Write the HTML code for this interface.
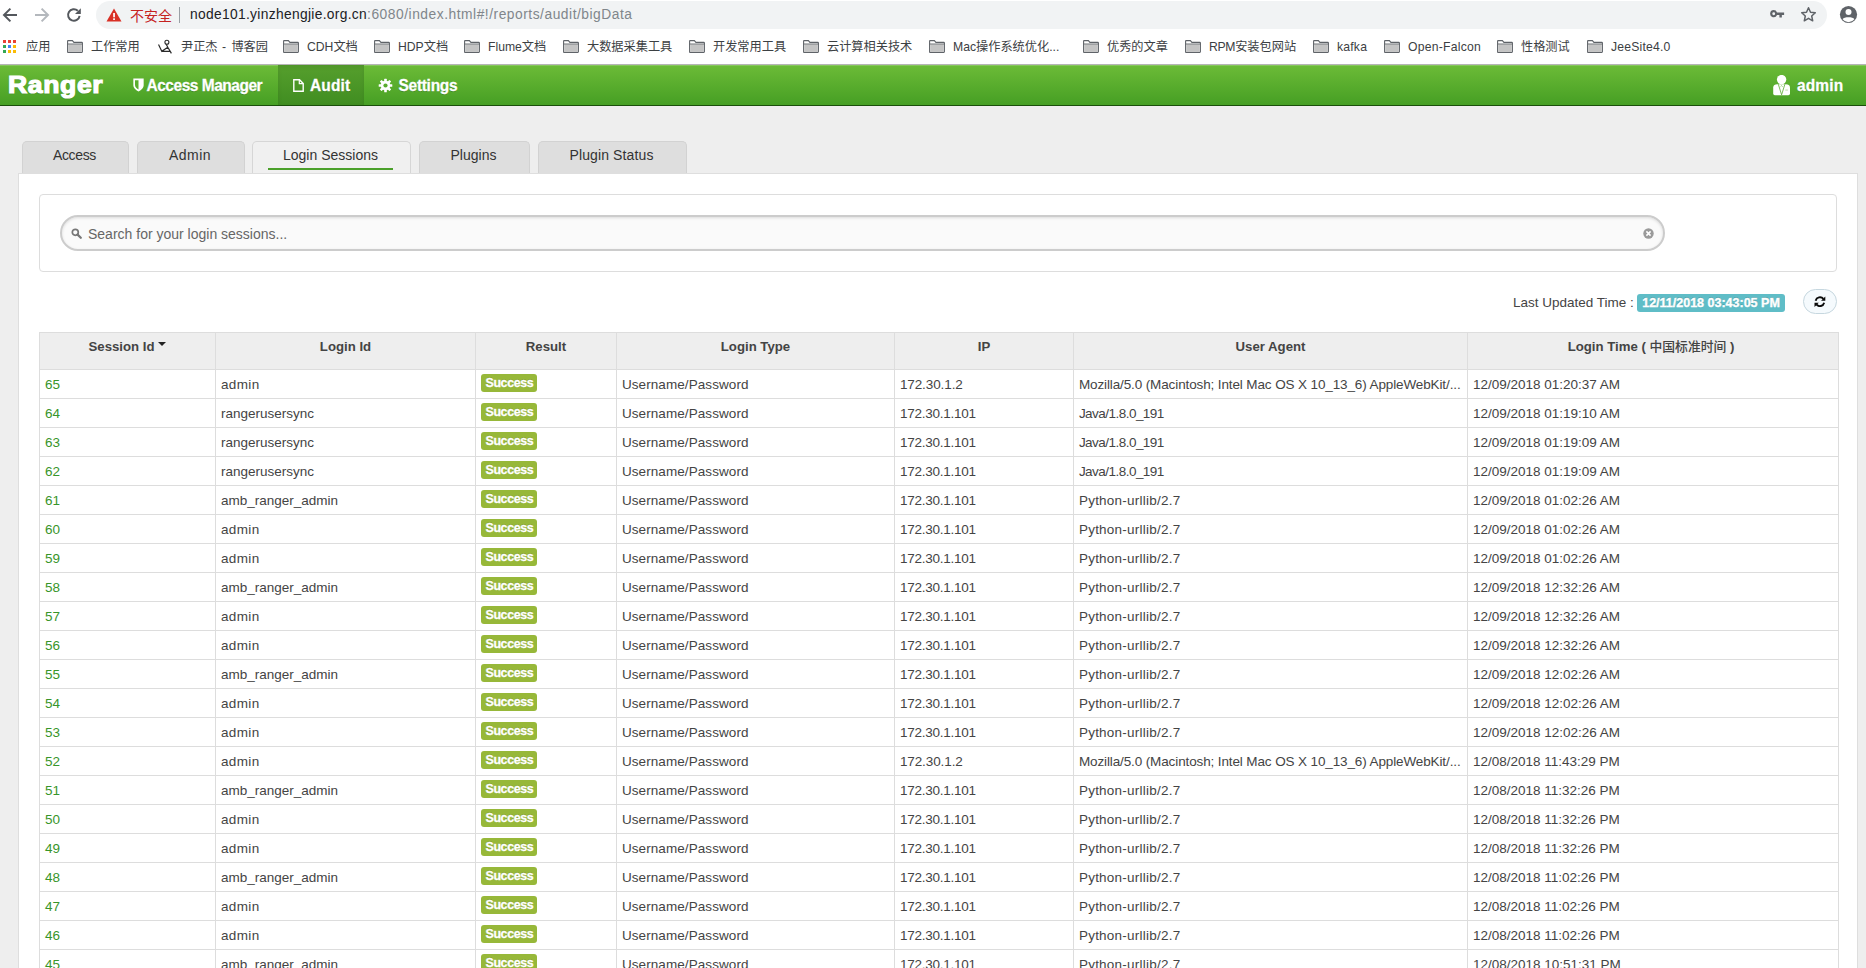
<!DOCTYPE html>
<html lang="zh">
<head>
<meta charset="utf-8">
<title>Ranger - Audit - Login Sessions</title>
<style>
*{box-sizing:border-box;margin:0;padding:0}
html,body{width:1866px;height:968px;overflow:hidden;background:#eeeeee;font-family:"Liberation Sans","Noto Sans CJK SC",sans-serif;font-size:13.5px;color:#444}
.abs{position:absolute}
/* ---------- browser chrome ---------- */
#chrome{position:absolute;left:0;top:0;width:1866px;height:64px;background:#fff}
#omni{position:absolute;left:96px;top:1px;width:1731px;height:28px;border-radius:14px;background:#f1f3f4}
#url{position:absolute;left:190px;top:6px;font-size:13.8px;line-height:18px;color:#202124;white-space:nowrap;letter-spacing:0.32px}
#url span{color:#80868b;letter-spacing:0.52px}
#unsafe{position:absolute;left:130px;top:5.6px;font-size:14px;line-height:20px;color:#c5221f;white-space:nowrap;font-family:"Liberation Sans","Noto Sans CJK SC",sans-serif}
#sep{position:absolute;left:179px;top:7px;width:1px;height:16px;background:#9aa0a6}
#bm{position:absolute;left:0;top:31px;width:1866px;height:33px;white-space:nowrap}
.bk{position:absolute;top:7.2px;font-size:12.2px;line-height:18px;color:#3c4043;white-space:nowrap;font-family:"Liberation Sans","Noto Sans CJK SC",sans-serif}
.fo{position:absolute;top:9.2px;width:16px;height:13px}
#chromeline{position:absolute;left:0;top:64px;width:1866px;height:1px;background:#b6b4b6}
/* ---------- navbar ---------- */
#nav{position:absolute;left:0;top:65px;width:1866px;height:41px;background:linear-gradient(#6cbb37,#469f24);border-bottom:1px solid #1a4f0a;box-shadow:inset 0 1px 0 rgba(255,255,255,.18)}
#logo{position:absolute;left:8.1px;top:2.3px;font-size:24px;line-height:35px;font-weight:bold;color:#fff;letter-spacing:0.6px;transform:scaleX(1.105);transform-origin:0 0;-webkit-text-stroke:1.2px #fff;text-shadow:0 1px 1px rgba(0,0,0,.25)}
.ni{position:absolute;top:0;height:40px;color:#fff;font-weight:bold;font-size:15.5px;line-height:41px;white-space:nowrap;text-shadow:0 1px 0 rgba(0,0,0,.2)}
#audit{left:278px;width:86px;background:linear-gradient(#569f2d,#408d21);box-shadow:inset 0 2px 4px rgba(0,0,0,.08)}
/* ---------- tabs ---------- */
.tab{position:absolute;top:141px;height:32px;background:#dedede;border:1px solid #d2d2d2;border-bottom:none;border-radius:5px 5px 0 0;text-align:center;padding-right:2px;font-size:14px;line-height:27px;color:#333}
.tab.act{background:#f0f0f0;border-color:#d6d6d6}
.tab.act i{position:absolute;left:15px;right:17px;bottom:3px;height:2px;background:#4aa02a}
#panel{position:absolute;left:18px;top:173px;width:1840px;height:820px;background:#fff;border:1px solid #dedede;z-index:2}
#sbox{z-index:3;position:absolute;left:39px;top:194px;width:1798px;height:78px;border:1px solid #ddd;border-radius:4px;background:#fff}
#sinp{z-index:3;position:absolute;left:60px;top:215px;width:1605px;height:36px;border:2px solid #ccc;border-radius:18px;background:#fafafa;box-shadow:inset 0 1px 3px rgba(0,0,0,.12)}
#sinp span{position:absolute;left:26px;top:7px;font-size:14px;line-height:20px;color:#666;white-space:nowrap}
#lut{z-index:3;position:absolute;left:1513px;top:293.8px;font-size:13.5px;line-height:18px;color:#444;white-space:nowrap}
#badge{z-index:3;position:absolute;left:1637px;top:294px;width:148px;height:18px;border-radius:3px;background:#5fbdc7;color:#fff;font-weight:bold;font-size:12.5px;line-height:18.4px;text-align:center;white-space:nowrap;letter-spacing:0px;-webkit-text-stroke:0.35px #fff;text-shadow:0 -1px 0 rgba(0,0,0,.2)}
#rbtn{z-index:3;position:absolute;left:1803px;top:289px;width:34px;height:25px;border:1px solid #c6d7df;border-radius:13px;background:#f5fafd}
/* ---------- table ---------- */
table{z-index:3;position:absolute;left:39px;top:332px;width:1799px;border-collapse:collapse;table-layout:fixed}
th,td{border:1px solid #ddd;white-space:nowrap;overflow:hidden}
th{height:37px;background:#eeeeee;font-weight:bold;font-size:13.2px;line-height:16px;color:#444;text-align:center;padding:0 0 8px 0}
th b{font-weight:500;font-size:12.8px;line-height:16px}
td{height:29px;padding:1.6px 0 0 4.9px;font-size:13.5px;line-height:26.4px;color:#444;background:#fff}
td a{color:#38952a}
.lbl{display:inline-block;vertical-align:top;margin-top:2.4px;margin-left:0.5px;height:18px;width:56px;border-radius:3px;background:#97b839;color:#fff;font-weight:bold;font-size:12.4px;line-height:18.6px;text-align:center;letter-spacing:-0.35px;-webkit-text-stroke:0.3px #fff;text-shadow:0 -1px 0 rgba(0,0,0,.15)}
.car{display:inline-block;width:0;height:0;border-left:4px solid transparent;border-right:4px solid transparent;border-top:4px solid #222;vertical-align:top;margin:3px 0 0 4px}
</style>
</head>
<body>
<div id="chrome">
  <div id="omni"></div>
  <svg class="abs" style="left:2px;top:7px" width="16" height="16" viewBox="0 0 16 16"><path d="M15 8H2.6M8.4 1.6L2 8L8.4 14.4" fill="none" stroke="#54585d" stroke-width="2"/></svg>
  <svg class="abs" style="left:34px;top:7px" width="16" height="16" viewBox="0 0 16 16"><path d="M1 8H13.4M7.6 1.6L14 8L7.6 14.4" fill="none" stroke="#b4b8bd" stroke-width="2"/></svg>
  <svg class="abs" style="left:66px;top:7px" width="16" height="16" viewBox="0 0 16 16"><path d="M13.6 8.8A5.8 5.8 0 1 1 11.8 3.7" fill="none" stroke="#54585d" stroke-width="2"/><path d="M14.8 1.2V7H9Z" fill="#54585d"/></svg>
  <svg class="abs" style="left:106px;top:8px" width="16" height="14" viewBox="0 0 16 14"><path d="M8 0.5L15.5 13.5H0.5Z" fill="#d93025"/><rect x="7.2" y="5" width="1.7" height="4.3" fill="#fff"/><rect x="7.2" y="10.3" width="1.7" height="1.7" fill="#fff"/></svg>
  <div id="unsafe">不安全</div>
  <div id="sep"></div>
  <div id="url">node101.yinzhengjie.org.cn<span>:6080/index.html#!/reports/audit/bigData</span></div>
  <svg class="abs" style="left:1768.5px;top:7.2px" width="17" height="13.4" viewBox="0 0 18 14"><path d="M5 3.2a3.8 3.8 0 1 0 3.5 5.3H11V11h2.6V8.5H16V5.7H8.5A3.8 3.8 0 0 0 5 3.2zM5 5.6a1.5 1.5 0 1 1 0 3a1.5 1.5 0 0 1 0-3z" fill="#5f6368" fill-rule="evenodd"/></svg>
  <svg class="abs" style="left:1800px;top:6px" width="17" height="17" viewBox="0 0 17 17"><path d="M8.5 1.8L10.5 6.3L15.3 6.8L11.7 10L12.7 14.8L8.5 12.3L4.3 14.8L5.3 10L1.7 6.8L6.5 6.3Z" fill="none" stroke="#5f6368" stroke-width="1.5" stroke-linejoin="round"/></svg>
  <svg class="abs" style="left:1839px;top:5px" width="19" height="19" viewBox="0 0 19 19"><circle cx="9.5" cy="9.5" r="8.6" fill="#5f6368"/><circle cx="9.5" cy="7" r="3" fill="#fff"/><path d="M3.6 14.2C5 11.6 14 11.6 15.4 14.2A7.4 7.4 0 0 1 3.6 14.2Z" fill="#fff"/></svg>
  <div id="bm">
<svg class="abs" style="left:3px;top:9px" width="13" height="13" viewBox="0 0 13 13"><rect x="0" y="0" width="3" height="3" fill="#ea4335"/><rect x="5" y="0" width="3" height="3" fill="#ea4335"/><rect x="10" y="0" width="3" height="3" fill="#ea4335"/><rect x="0" y="5" width="3" height="3" fill="#34a853"/><rect x="5" y="5" width="3" height="3" fill="#4285f4"/><rect x="10" y="5" width="3" height="3" fill="#fbbc05"/><rect x="0" y="10" width="3" height="3" fill="#34a853"/><rect x="5" y="10" width="3" height="3" fill="#fbbc05"/><rect x="10" y="10" width="3" height="3" fill="#fbbc05"/></svg>
<div class="bk" style="left:26px">应用</div>
<svg class="fo" style="left:67px" viewBox="0 0 16 13"><path d="M0.6 1.2Q0.6 0.6 1.2 0.6H5.4L6.9 2.4H14.8Q15.4 2.4 15.4 3V11.8Q15.4 12.4 14.8 12.4H1.2Q0.6 12.4 0.6 11.8Z" fill="#fff" stroke="#5f6368" stroke-width="1.1"/><path d="M1.2 4.3H14.8V11.9H1.2Z" fill="#c4c4c4"/><path d="M0.6 4H15.4" stroke="#5f6368" stroke-width="0.9"/></svg>
<div class="bk" style="left:91px">工作常用</div>
<svg class="abs" style="left:158px;top:8px" width="16" height="16" viewBox="0 0 16 16"><path d="M0.5 5.5L3.8 12.3L9.8 8.2M3.8 12.3H12.6M8.2 5.2L9.8 8.2L13.4 14.4" fill="none" stroke="#2a2a2a" stroke-width="1.2"/><circle cx="8.9" cy="3.3" r="2" fill="none" stroke="#2a2a2a" stroke-width="1.1"/></svg>
<div class="bk" style="left:181px">尹正杰<span style="letter-spacing:1px"> - </span>博客园</div>
<svg class="fo" style="left:283px" viewBox="0 0 16 13"><path d="M0.6 1.2Q0.6 0.6 1.2 0.6H5.4L6.9 2.4H14.8Q15.4 2.4 15.4 3V11.8Q15.4 12.4 14.8 12.4H1.2Q0.6 12.4 0.6 11.8Z" fill="#fff" stroke="#5f6368" stroke-width="1.1"/><path d="M1.2 4.3H14.8V11.9H1.2Z" fill="#c4c4c4"/><path d="M0.6 4H15.4" stroke="#5f6368" stroke-width="0.9"/></svg>
<div class="bk" style="left:307px">CDH文档</div>
<svg class="fo" style="left:374px" viewBox="0 0 16 13"><path d="M0.6 1.2Q0.6 0.6 1.2 0.6H5.4L6.9 2.4H14.8Q15.4 2.4 15.4 3V11.8Q15.4 12.4 14.8 12.4H1.2Q0.6 12.4 0.6 11.8Z" fill="#fff" stroke="#5f6368" stroke-width="1.1"/><path d="M1.2 4.3H14.8V11.9H1.2Z" fill="#c4c4c4"/><path d="M0.6 4H15.4" stroke="#5f6368" stroke-width="0.9"/></svg>
<div class="bk" style="left:398px">HDP文档</div>
<svg class="fo" style="left:464px" viewBox="0 0 16 13"><path d="M0.6 1.2Q0.6 0.6 1.2 0.6H5.4L6.9 2.4H14.8Q15.4 2.4 15.4 3V11.8Q15.4 12.4 14.8 12.4H1.2Q0.6 12.4 0.6 11.8Z" fill="#fff" stroke="#5f6368" stroke-width="1.1"/><path d="M1.2 4.3H14.8V11.9H1.2Z" fill="#c4c4c4"/><path d="M0.6 4H15.4" stroke="#5f6368" stroke-width="0.9"/></svg>
<div class="bk" style="left:488px">Flume文档</div>
<svg class="fo" style="left:563px" viewBox="0 0 16 13"><path d="M0.6 1.2Q0.6 0.6 1.2 0.6H5.4L6.9 2.4H14.8Q15.4 2.4 15.4 3V11.8Q15.4 12.4 14.8 12.4H1.2Q0.6 12.4 0.6 11.8Z" fill="#fff" stroke="#5f6368" stroke-width="1.1"/><path d="M1.2 4.3H14.8V11.9H1.2Z" fill="#c4c4c4"/><path d="M0.6 4H15.4" stroke="#5f6368" stroke-width="0.9"/></svg>
<div class="bk" style="left:587px">大数据采集工具</div>
<svg class="fo" style="left:689px" viewBox="0 0 16 13"><path d="M0.6 1.2Q0.6 0.6 1.2 0.6H5.4L6.9 2.4H14.8Q15.4 2.4 15.4 3V11.8Q15.4 12.4 14.8 12.4H1.2Q0.6 12.4 0.6 11.8Z" fill="#fff" stroke="#5f6368" stroke-width="1.1"/><path d="M1.2 4.3H14.8V11.9H1.2Z" fill="#c4c4c4"/><path d="M0.6 4H15.4" stroke="#5f6368" stroke-width="0.9"/></svg>
<div class="bk" style="left:713px">开发常用工具</div>
<svg class="fo" style="left:803px" viewBox="0 0 16 13"><path d="M0.6 1.2Q0.6 0.6 1.2 0.6H5.4L6.9 2.4H14.8Q15.4 2.4 15.4 3V11.8Q15.4 12.4 14.8 12.4H1.2Q0.6 12.4 0.6 11.8Z" fill="#fff" stroke="#5f6368" stroke-width="1.1"/><path d="M1.2 4.3H14.8V11.9H1.2Z" fill="#c4c4c4"/><path d="M0.6 4H15.4" stroke="#5f6368" stroke-width="0.9"/></svg>
<div class="bk" style="left:827px">云计算相关技术</div>
<svg class="fo" style="left:929px" viewBox="0 0 16 13"><path d="M0.6 1.2Q0.6 0.6 1.2 0.6H5.4L6.9 2.4H14.8Q15.4 2.4 15.4 3V11.8Q15.4 12.4 14.8 12.4H1.2Q0.6 12.4 0.6 11.8Z" fill="#fff" stroke="#5f6368" stroke-width="1.1"/><path d="M1.2 4.3H14.8V11.9H1.2Z" fill="#c4c4c4"/><path d="M0.6 4H15.4" stroke="#5f6368" stroke-width="0.9"/></svg>
<div class="bk" style="left:953px">Mac操作系统优化...</div>
<svg class="fo" style="left:1083px" viewBox="0 0 16 13"><path d="M0.6 1.2Q0.6 0.6 1.2 0.6H5.4L6.9 2.4H14.8Q15.4 2.4 15.4 3V11.8Q15.4 12.4 14.8 12.4H1.2Q0.6 12.4 0.6 11.8Z" fill="#fff" stroke="#5f6368" stroke-width="1.1"/><path d="M1.2 4.3H14.8V11.9H1.2Z" fill="#c4c4c4"/><path d="M0.6 4H15.4" stroke="#5f6368" stroke-width="0.9"/></svg>
<div class="bk" style="left:1107px">优秀的文章</div>
<svg class="fo" style="left:1185px" viewBox="0 0 16 13"><path d="M0.6 1.2Q0.6 0.6 1.2 0.6H5.4L6.9 2.4H14.8Q15.4 2.4 15.4 3V11.8Q15.4 12.4 14.8 12.4H1.2Q0.6 12.4 0.6 11.8Z" fill="#fff" stroke="#5f6368" stroke-width="1.1"/><path d="M1.2 4.3H14.8V11.9H1.2Z" fill="#c4c4c4"/><path d="M0.6 4H15.4" stroke="#5f6368" stroke-width="0.9"/></svg>
<div class="bk" style="left:1209px"><span style="letter-spacing:-0.3px">RPM</span>安装包网站</div>
<svg class="fo" style="left:1313px" viewBox="0 0 16 13"><path d="M0.6 1.2Q0.6 0.6 1.2 0.6H5.4L6.9 2.4H14.8Q15.4 2.4 15.4 3V11.8Q15.4 12.4 14.8 12.4H1.2Q0.6 12.4 0.6 11.8Z" fill="#fff" stroke="#5f6368" stroke-width="1.1"/><path d="M1.2 4.3H14.8V11.9H1.2Z" fill="#c4c4c4"/><path d="M0.6 4H15.4" stroke="#5f6368" stroke-width="0.9"/></svg>
<div class="bk" style="left:1337px"><span style="letter-spacing:0.2px">kafka</span></div>
<svg class="fo" style="left:1384px" viewBox="0 0 16 13"><path d="M0.6 1.2Q0.6 0.6 1.2 0.6H5.4L6.9 2.4H14.8Q15.4 2.4 15.4 3V11.8Q15.4 12.4 14.8 12.4H1.2Q0.6 12.4 0.6 11.8Z" fill="#fff" stroke="#5f6368" stroke-width="1.1"/><path d="M1.2 4.3H14.8V11.9H1.2Z" fill="#c4c4c4"/><path d="M0.6 4H15.4" stroke="#5f6368" stroke-width="0.9"/></svg>
<div class="bk" style="left:1408px"><span style="letter-spacing:0.24px">Open-Falcon</span></div>
<svg class="fo" style="left:1497px" viewBox="0 0 16 13"><path d="M0.6 1.2Q0.6 0.6 1.2 0.6H5.4L6.9 2.4H14.8Q15.4 2.4 15.4 3V11.8Q15.4 12.4 14.8 12.4H1.2Q0.6 12.4 0.6 11.8Z" fill="#fff" stroke="#5f6368" stroke-width="1.1"/><path d="M1.2 4.3H14.8V11.9H1.2Z" fill="#c4c4c4"/><path d="M0.6 4H15.4" stroke="#5f6368" stroke-width="0.9"/></svg>
<div class="bk" style="left:1521px">性格测试</div>
<svg class="fo" style="left:1587px" viewBox="0 0 16 13"><path d="M0.6 1.2Q0.6 0.6 1.2 0.6H5.4L6.9 2.4H14.8Q15.4 2.4 15.4 3V11.8Q15.4 12.4 14.8 12.4H1.2Q0.6 12.4 0.6 11.8Z" fill="#fff" stroke="#5f6368" stroke-width="1.1"/><path d="M1.2 4.3H14.8V11.9H1.2Z" fill="#c4c4c4"/><path d="M0.6 4H15.4" stroke="#5f6368" stroke-width="0.9"/></svg>
<div class="bk" style="left:1611px"><span style="letter-spacing:0.2px">JeeSite4.0</span></div>
  </div>
</div>
<div id="chromeline"></div>
<div id="nav">
  <div id="logo">Ranger</div>
  <div class="ni" style="left:131px"><svg style="position:absolute;left:2px;top:13px" width="11" height="14" viewBox="0 0 10 13" preserveAspectRatio="none"><path d="M0.3 0.5H9.7V6.5C9.7 9.5 7 11.6 5 12.6C3 11.6 0.3 9.5 0.3 6.5Z" fill="#fff"/><path d="M5 2V10.7C3.6 9.8 1.8 8.4 1.8 6.4V2Z" fill="#5aae2f"/></svg><span style="display:inline-block;transform:scaleY(1.1);transform-origin:0 68%;-webkit-text-stroke:0.25px #fff;margin-left:15.5px;letter-spacing:-0.48px">Access Manager</span></div>
  <div class="ni" id="audit"><svg style="position:absolute;left:15px;top:14px" width="11" height="13" viewBox="0 0 11 13"><path d="M0.8 0.8H6.5L10.2 4.5V12.2H0.8Z" fill="none" stroke="#fff" stroke-width="1.4"/><path d="M6.3 0.8V4.7H10.2" fill="none" stroke="#fff" stroke-width="1.2"/></svg><span style="display:inline-block;transform:scaleY(1.1);transform-origin:0 68%;-webkit-text-stroke:0.25px #fff;margin-left:32px;letter-spacing:0.14px">Audit</span></div>
  <div class="ni" style="left:378px"><svg style="position:absolute;left:0px;top:13px" width="15" height="15" viewBox="0 0 15 15"><g fill="#fff"><circle cx="7.5" cy="7.5" r="4.8"/><g id="t"><rect x="6.2" y="0.7" width="2.6" height="13.6" rx="0.5"/></g><rect x="6.2" y="0.7" width="2.6" height="13.6" rx="0.5" transform="rotate(45 7.5 7.5)"/><rect x="6.2" y="0.7" width="2.6" height="13.6" rx="0.5" transform="rotate(90 7.5 7.5)"/><rect x="6.2" y="0.7" width="2.6" height="13.6" rx="0.5" transform="rotate(135 7.5 7.5)"/></g><circle cx="7.5" cy="7.5" r="2.1" fill="#58ac2d"/></svg><span style="display:inline-block;transform:scaleY(1.1);transform-origin:0 68%;-webkit-text-stroke:0.25px #fff;margin-left:20.5px;letter-spacing:-0.29px">Settings</span></div>
  <div class="ni" style="left:1772px"><svg style="position:absolute;left:0;top:10px" width="19" height="21" viewBox="0 0 19 21"><circle cx="9.6" cy="4.6" r="4.7" fill="#fff"/><path d="M1.2 18.6V12.4C1.2 10.4 3 9.3 5.2 9.3H14C16.2 9.3 18 10.4 18 12.4V18.6Q18 20.2 16.4 20.2H2.8Q1.2 20.2 1.2 18.6Z" fill="#fff"/><path d="M6.3 9.2L9.6 19.8L12.9 9.2" fill="none" stroke="#58ab2d" stroke-width="0.8"/><path d="M8.5 11.7L9.6 10.7L10.7 11.7" fill="none" stroke="#58ab2d" stroke-width="0.6"/><rect x="13.3" y="14.7" width="2.6" height="0.7" fill="#9fd383"/></svg><span style="display:inline-block;transform:scaleY(1.1);transform-origin:0 68%;-webkit-text-stroke:0.25px #fff;margin-left:25px;letter-spacing:0.13px">admin</span></div>
</div>
<div id="panel"></div>
<div class="tab" style="left:22px;width:107px;letter-spacing:-0.35px">Access</div>
<div class="tab" style="left:137px;width:108px;letter-spacing:0.45px">Admin</div>
<div class="tab act" style="left:252px;width:159px">Login Sessions<i></i></div>
<div class="tab" style="left:419px;width:111px">Plugins</div>
<div class="tab" style="left:538px;width:149px;letter-spacing:0.12px">Plugin Status</div>
<div id="sbox"></div>
<div id="sinp"><svg style="position:absolute;left:9px;top:11px" width="11" height="11" viewBox="0 0 11 11"><circle cx="4.3" cy="4.3" r="3" fill="none" stroke="#777" stroke-width="1.7"/><path d="M6.6 6.6L9.8 9.8" stroke="#777" stroke-width="2.2" stroke-linecap="round"/></svg><span>Search for your login sessions...</span>
<svg style="position:absolute;left:1581px;top:11px" width="11" height="11" viewBox="0 0 11 11"><circle cx="5.5" cy="5.5" r="5.2" fill="#9a9a9a"/><path d="M3.4 3.4L7.6 7.6M7.6 3.4L3.4 7.6" stroke="#fff" stroke-width="1.5"/></svg></div>
<div id="lut">Last Updated Time :</div>
<div id="badge">12/11/2018 03:43:05 PM</div>
<div id="rbtn"><svg style="position:absolute;left:10.2px;top:5.7px" width="11.8" height="11.4" viewBox="0 0 12 12"><path d="M1.5 4.9A4.7 4.7 0 0 1 9.7 3.1" fill="none" stroke="#0a0a0a" stroke-width="2"/><path d="M11.7 0.5V5H7.2Z" fill="#0a0a0a"/><path d="M10.5 7.1A4.7 4.7 0 0 1 2.3 8.9" fill="none" stroke="#0a0a0a" stroke-width="2"/><path d="M0.3 11.5V7H4.8Z" fill="#0a0a0a"/></svg></div>
<table>
<colgroup><col style="width:176px"><col style="width:260px"><col style="width:141px"><col style="width:278px"><col style="width:179px"><col style="width:394px"><col style="width:371px"></colgroup>
<tr><th>Session Id<span class="car"></span></th><th>Login Id</th><th>Result</th><th>Login Type</th><th>IP</th><th>User Agent</th><th style="padding-right:4px">Login Time ( <b>中国标准时间</b> )</th></tr>
<tr><td><a>65</a></td><td><span style="letter-spacing:0.38px">admin</span></td><td><span class="lbl">Success</span></td><td><span style="letter-spacing:0.08px">Username/Password</span></td><td><span style="letter-spacing:-0.1px">172.30.1.2</span></td><td><span style="letter-spacing:-0.12px">Mozilla/5.0 (Macintosh; Intel Mac OS X 10_13_6) AppleWebKit/...</span></td><td>12/09/2018 01:20:37 AM</td></tr>
<tr><td><a>64</a></td><td>rangerusersync</td><td><span class="lbl">Success</span></td><td><span style="letter-spacing:0.08px">Username/Password</span></td><td><span style="letter-spacing:-0.25px">172.30.1.101</span></td><td><span style="letter-spacing:-0.53px">Java/1.8.0_191</span></td><td>12/09/2018 01:19:10 AM</td></tr>
<tr><td><a>63</a></td><td>rangerusersync</td><td><span class="lbl">Success</span></td><td><span style="letter-spacing:0.08px">Username/Password</span></td><td><span style="letter-spacing:-0.25px">172.30.1.101</span></td><td><span style="letter-spacing:-0.53px">Java/1.8.0_191</span></td><td>12/09/2018 01:19:09 AM</td></tr>
<tr><td><a>62</a></td><td>rangerusersync</td><td><span class="lbl">Success</span></td><td><span style="letter-spacing:0.08px">Username/Password</span></td><td><span style="letter-spacing:-0.25px">172.30.1.101</span></td><td><span style="letter-spacing:-0.53px">Java/1.8.0_191</span></td><td>12/09/2018 01:19:09 AM</td></tr>
<tr><td><a>61</a></td><td>amb_ranger_admin</td><td><span class="lbl">Success</span></td><td><span style="letter-spacing:0.08px">Username/Password</span></td><td><span style="letter-spacing:-0.25px">172.30.1.101</span></td><td><span style="letter-spacing:0.24px">Python-urllib/2.7</span></td><td>12/09/2018 01:02:26 AM</td></tr>
<tr><td><a>60</a></td><td><span style="letter-spacing:0.38px">admin</span></td><td><span class="lbl">Success</span></td><td><span style="letter-spacing:0.08px">Username/Password</span></td><td><span style="letter-spacing:-0.25px">172.30.1.101</span></td><td><span style="letter-spacing:0.24px">Python-urllib/2.7</span></td><td>12/09/2018 01:02:26 AM</td></tr>
<tr><td><a>59</a></td><td><span style="letter-spacing:0.38px">admin</span></td><td><span class="lbl">Success</span></td><td><span style="letter-spacing:0.08px">Username/Password</span></td><td><span style="letter-spacing:-0.25px">172.30.1.101</span></td><td><span style="letter-spacing:0.24px">Python-urllib/2.7</span></td><td>12/09/2018 01:02:26 AM</td></tr>
<tr><td><a>58</a></td><td>amb_ranger_admin</td><td><span class="lbl">Success</span></td><td><span style="letter-spacing:0.08px">Username/Password</span></td><td><span style="letter-spacing:-0.25px">172.30.1.101</span></td><td><span style="letter-spacing:0.24px">Python-urllib/2.7</span></td><td>12/09/2018 12:32:26 AM</td></tr>
<tr><td><a>57</a></td><td><span style="letter-spacing:0.38px">admin</span></td><td><span class="lbl">Success</span></td><td><span style="letter-spacing:0.08px">Username/Password</span></td><td><span style="letter-spacing:-0.25px">172.30.1.101</span></td><td><span style="letter-spacing:0.24px">Python-urllib/2.7</span></td><td>12/09/2018 12:32:26 AM</td></tr>
<tr><td><a>56</a></td><td><span style="letter-spacing:0.38px">admin</span></td><td><span class="lbl">Success</span></td><td><span style="letter-spacing:0.08px">Username/Password</span></td><td><span style="letter-spacing:-0.25px">172.30.1.101</span></td><td><span style="letter-spacing:0.24px">Python-urllib/2.7</span></td><td>12/09/2018 12:32:26 AM</td></tr>
<tr><td><a>55</a></td><td>amb_ranger_admin</td><td><span class="lbl">Success</span></td><td><span style="letter-spacing:0.08px">Username/Password</span></td><td><span style="letter-spacing:-0.25px">172.30.1.101</span></td><td><span style="letter-spacing:0.24px">Python-urllib/2.7</span></td><td>12/09/2018 12:02:26 AM</td></tr>
<tr><td><a>54</a></td><td><span style="letter-spacing:0.38px">admin</span></td><td><span class="lbl">Success</span></td><td><span style="letter-spacing:0.08px">Username/Password</span></td><td><span style="letter-spacing:-0.25px">172.30.1.101</span></td><td><span style="letter-spacing:0.24px">Python-urllib/2.7</span></td><td>12/09/2018 12:02:26 AM</td></tr>
<tr><td><a>53</a></td><td><span style="letter-spacing:0.38px">admin</span></td><td><span class="lbl">Success</span></td><td><span style="letter-spacing:0.08px">Username/Password</span></td><td><span style="letter-spacing:-0.25px">172.30.1.101</span></td><td><span style="letter-spacing:0.24px">Python-urllib/2.7</span></td><td>12/09/2018 12:02:26 AM</td></tr>
<tr><td><a>52</a></td><td><span style="letter-spacing:0.38px">admin</span></td><td><span class="lbl">Success</span></td><td><span style="letter-spacing:0.08px">Username/Password</span></td><td><span style="letter-spacing:-0.1px">172.30.1.2</span></td><td><span style="letter-spacing:-0.12px">Mozilla/5.0 (Macintosh; Intel Mac OS X 10_13_6) AppleWebKit/...</span></td><td>12/08/2018 11:43:29 PM</td></tr>
<tr><td><a>51</a></td><td>amb_ranger_admin</td><td><span class="lbl">Success</span></td><td><span style="letter-spacing:0.08px">Username/Password</span></td><td><span style="letter-spacing:-0.25px">172.30.1.101</span></td><td><span style="letter-spacing:0.24px">Python-urllib/2.7</span></td><td>12/08/2018 11:32:26 PM</td></tr>
<tr><td><a>50</a></td><td><span style="letter-spacing:0.38px">admin</span></td><td><span class="lbl">Success</span></td><td><span style="letter-spacing:0.08px">Username/Password</span></td><td><span style="letter-spacing:-0.25px">172.30.1.101</span></td><td><span style="letter-spacing:0.24px">Python-urllib/2.7</span></td><td>12/08/2018 11:32:26 PM</td></tr>
<tr><td><a>49</a></td><td><span style="letter-spacing:0.38px">admin</span></td><td><span class="lbl">Success</span></td><td><span style="letter-spacing:0.08px">Username/Password</span></td><td><span style="letter-spacing:-0.25px">172.30.1.101</span></td><td><span style="letter-spacing:0.24px">Python-urllib/2.7</span></td><td>12/08/2018 11:32:26 PM</td></tr>
<tr><td><a>48</a></td><td>amb_ranger_admin</td><td><span class="lbl">Success</span></td><td><span style="letter-spacing:0.08px">Username/Password</span></td><td><span style="letter-spacing:-0.25px">172.30.1.101</span></td><td><span style="letter-spacing:0.24px">Python-urllib/2.7</span></td><td>12/08/2018 11:02:26 PM</td></tr>
<tr><td><a>47</a></td><td><span style="letter-spacing:0.38px">admin</span></td><td><span class="lbl">Success</span></td><td><span style="letter-spacing:0.08px">Username/Password</span></td><td><span style="letter-spacing:-0.25px">172.30.1.101</span></td><td><span style="letter-spacing:0.24px">Python-urllib/2.7</span></td><td>12/08/2018 11:02:26 PM</td></tr>
<tr><td><a>46</a></td><td><span style="letter-spacing:0.38px">admin</span></td><td><span class="lbl">Success</span></td><td><span style="letter-spacing:0.08px">Username/Password</span></td><td><span style="letter-spacing:-0.25px">172.30.1.101</span></td><td><span style="letter-spacing:0.24px">Python-urllib/2.7</span></td><td>12/08/2018 11:02:26 PM</td></tr>
<tr><td><a>45</a></td><td>amb_ranger_admin</td><td><span class="lbl">Success</span></td><td><span style="letter-spacing:0.08px">Username/Password</span></td><td><span style="letter-spacing:-0.25px">172.30.1.101</span></td><td><span style="letter-spacing:0.24px">Python-urllib/2.7</span></td><td>12/08/2018 10:51:31 PM</td></tr>
<tr><td><a>44</a></td><td><span style="letter-spacing:0.38px">admin</span></td><td><span class="lbl">Success</span></td><td><span style="letter-spacing:0.08px">Username/Password</span></td><td><span style="letter-spacing:-0.25px">172.30.1.101</span></td><td><span style="letter-spacing:0.24px">Python-urllib/2.7</span></td><td>12/08/2018 10:51:31 PM</td></tr></table>
</body>
</html>
